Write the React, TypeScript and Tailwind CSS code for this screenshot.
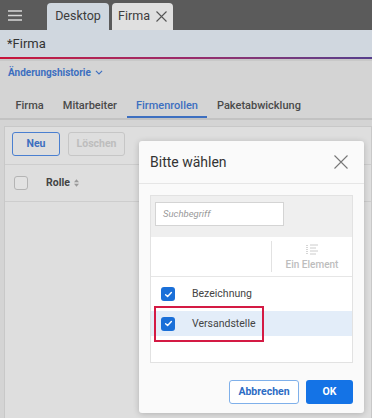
import React from 'react';

const tabs = ['Firma', 'Mitarbeiter', 'Firmenrollen', 'Paketabwicklung'];

const CheckBox = ({ checked }: { checked?: boolean }) =>
  checked ? (
    <span className="flex h-[14px] w-[14px] items-center justify-center rounded-[3px] bg-[#1a6fd8]">
      <svg width="9" height="9" viewBox="0 0 10 10">
        <path d="M1.8 5.2 L4 7.2 L8.2 2.8" fill="none" stroke="#fff" strokeWidth="1.6" strokeLinecap="round" strokeLinejoin="round" />
      </svg>
    </span>
  ) : (
    <span className="block h-[14px] w-[14px] rounded-[3px] border border-[#b4b4b4] bg-[#e2e2e2]" />
  );

export default function App() {
  return (
    <div className="relative h-[418px] w-[372px] overflow-hidden bg-[#d4d4d4] font-['Roboto',sans-serif]">
      {/* top bar */}
      <div className="flex h-[30px] items-end bg-[#5b5b5b]">
        <div className="flex h-[30px] w-[47px] items-center pl-[8px]">
          <svg width="14" height="11" viewBox="0 0 14 11">
            <path d="M0 1h14M0 5.5h14M0 10h14" stroke="#d8d8d8" strokeWidth="1.6" />
          </svg>
        </div>
        <div className="flex h-[27px] w-[62px] items-center justify-center rounded-t-[4px] bg-[#cfd7df] text-[12.5px] text-[#3c3c3c]">
          Desktop
        </div>
        <div className="ml-[3px] flex h-[27px] w-[61px] items-center justify-center gap-[6px] rounded-t-[4px] bg-[#e0e0e0] text-[12.5px] text-[#3c3c3c]">
          Firma
          <svg width="11" height="11" viewBox="0 0 11 11">
            <path d="M0.5 0.5l10 10M10.5 0.5l-10 10" stroke="#555" strokeWidth="1.1" />
          </svg>
        </div>
      </div>
      {/* header band */}
      <div className="flex h-[27px] items-center bg-[#d0d7df] pl-[7px] text-[13px] text-[#333]">*Firma</div>
      <div className="h-[2px] bg-gradient-to-r from-[#c8123a] via-[#9a2a6a] to-[#553d8c]" />
      <div className="h-[2px] bg-[#c8c8c8]" />
      {/* history */}
      <div className="flex h-[19px] items-center gap-[4px] pl-[8px] pt-[3px] text-[10px] font-bold text-[#3d6fc0]">
        Änderungshistorie
        <svg width="8" height="5" viewBox="0 0 9 6">
          <path d="M0.8 1l3.7 3.7L8.2 1" fill="none" stroke="#3d6fc0" strokeWidth="1.3" />
        </svg>
      </div>
      {/* tabs */}
      <div className="mt-[15px] flex h-[25px] border-b-[2px] border-[#c2c2c2] pl-[6px]">
        {tabs.map((t) => (
          <div
            key={t}
            className={`flex h-[23px] items-center px-[9.5px] text-[11px] font-medium ${
              t === 'Firmenrollen' ? 'border-b-[2px] border-[#3d6fc0] pt-[2px] text-[#3d6fc0]' : 'text-[#4a4a4a]'
            }`}
          >
            {t}
          </div>
        ))}
      </div>
      {/* content panel */}
      <div className="ml-[4px] mt-[6px] h-[300px] border border-[#c8c8c8] bg-[#dedede]">
        <div className="flex gap-[8px] px-[7px] pt-[5px]">
          <div className="flex h-[24px] w-[48px] items-center justify-center rounded-[3px] border border-[#4a7fd0] text-[10.5px] font-bold text-[#3d6fc0]">
            Neu
          </div>
          <div className="flex h-[24px] w-[57px] items-center justify-center rounded-[3px] border border-[#c6c6c6] text-[10.5px] font-bold text-[#bdbdbd]">
            Löschen
          </div>
        </div>
        <div className="mt-[8px] flex h-[38px] items-center border-y border-[#cdcdcd] pl-[9px]">
          <CheckBox />
          <span className="ml-[18px] text-[10.5px] font-bold text-[#444]">Rolle</span>
          <svg className="ml-[4px]" width="5" height="8" viewBox="0 0 6 9">
            <path d="M3 0L6 3.5H0zM3 9L0 5.5h6z" fill="#9a9a9a" />
          </svg>
        </div>
      </div>

      {/* dialog */}
      <div className="absolute left-[139px] top-[141px] flex h-[272px] w-[225px] flex-col rounded-[3px] bg-[#fafafa] shadow-[0_1px_6px_rgba(0,0,0,0.2)]">
        <div className="flex h-[43px] items-center justify-between border-b border-[#e6e6e6] pl-[11px] pr-[16px]">
          <span className="text-[14px] text-[#333]">Bitte wählen</span>
          <svg width="14" height="14" viewBox="0 0 14 14">
            <path d="M0.5 0.5l13 13M13.5 0.5l-13 13" stroke="#777" strokeWidth="1.1" />
          </svg>
        </div>
        <div className="mx-[11px] mt-[11px] border border-[#e2e2e2]">
          <div className="h-[41px] bg-[#efefef] pl-[4px] pt-[6px]">
            <div className="flex h-[24px] w-[129px] items-center border border-[#d4d4d4] bg-white pl-[7px] text-[9.5px] italic text-[#999]">
              Suchbegriff
            </div>
          </div>
          <div className="relative h-[125px] bg-white">
            <div className="flex h-[40px] border-b border-[#e6e6e6]">
              <div className="flex-1" />
              <div className="my-[4px] w-px bg-[#e2e2e2]" />
              <div className="flex w-[80px] flex-col items-center justify-center gap-[2px] pt-[2px]">
                <svg width="12" height="11" viewBox="0 0 12 11">
                  <path d="M1 1v9" stroke="#cccccc" strokeWidth="1.6" strokeDasharray="1 1" />
                  <path d="M4 1h8M4 4h6M4 7h8M4 10h6" stroke="#cccccc" strokeWidth="1" />
                </svg>
                <span className="text-[10px] font-medium text-[#bdbdbd]">Ein Element</span>
              </div>
            </div>
            <div className="mt-[4px] flex h-[26px] items-center pl-[10px]">
              <CheckBox checked />
              <span className="ml-[17px] text-[10.5px] text-[#444]">Bezeichnung</span>
            </div>
            <div className="mt-[4px] flex h-[25px] items-center bg-[#e3edf9] pl-[10px]">
              <CheckBox checked />
              <span className="ml-[17px] text-[10.5px] text-[#444]">Versandstelle</span>
            </div>
            <div className="absolute left-[3px] top-[69px] h-[36px] w-[110px] border-2 border-[#d41a44]" />
          </div>
        </div>
        <div className="mt-auto flex justify-end gap-[7px] pb-[9px] pr-[11px]">
          <div className="flex h-[24px] w-[70px] items-center justify-center rounded-[3px] border border-[#7fb0ea] bg-white text-[10.5px] font-bold text-[#2d6cc4]">
            Abbrechen
          </div>
          <div className="flex h-[24px] w-[47px] items-center justify-center rounded-[3px] bg-[#1473e6] text-[10.5px] font-bold text-white">
            OK
          </div>
        </div>
      </div>
    </div>
  );
}
